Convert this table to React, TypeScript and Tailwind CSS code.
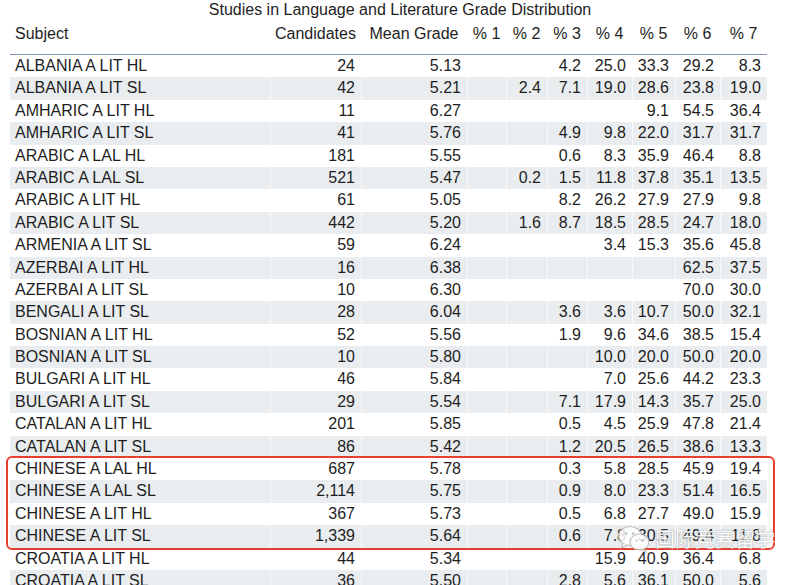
import React from "react";

type Row = [string, string, string, string, string, string, string, string, string, string];

const rows: Row[] = [
  ["ALBANIA A LIT HL", "24", "5.13", "", "", "4.2", "25.0", "33.3", "29.2", "8.3"],
  ["ALBANIA A LIT SL", "42", "5.21", "", "2.4", "7.1", "19.0", "28.6", "23.8", "19.0"],
  ["AMHARIC A LIT HL", "11", "6.27", "", "", "", "", "9.1", "54.5", "36.4"],
  ["AMHARIC A LIT SL", "41", "5.76", "", "", "4.9", "9.8", "22.0", "31.7", "31.7"],
  ["ARABIC A LAL HL", "181", "5.55", "", "", "0.6", "8.3", "35.9", "46.4", "8.8"],
  ["ARABIC A LAL SL", "521", "5.47", "", "0.2", "1.5", "11.8", "37.8", "35.1", "13.5"],
  ["ARABIC A LIT HL", "61", "5.05", "", "", "8.2", "26.2", "27.9", "27.9", "9.8"],
  ["ARABIC A LIT SL", "442", "5.20", "", "1.6", "8.7", "18.5", "28.5", "24.7", "18.0"],
  ["ARMENIA A LIT SL", "59", "6.24", "", "", "", "3.4", "15.3", "35.6", "45.8"],
  ["AZERBAI A LIT HL", "16", "6.38", "", "", "", "", "", "62.5", "37.5"],
  ["AZERBAI A LIT SL", "10", "6.30", "", "", "", "", "", "70.0", "30.0"],
  ["BENGALI A LIT SL", "28", "6.04", "", "", "3.6", "3.6", "10.7", "50.0", "32.1"],
  ["BOSNIAN A LIT HL", "52", "5.56", "", "", "1.9", "9.6", "34.6", "38.5", "15.4"],
  ["BOSNIAN A LIT SL", "10", "5.80", "", "", "", "10.0", "20.0", "50.0", "20.0"],
  ["BULGARI A LIT HL", "46", "5.84", "", "", "", "7.0", "25.6", "44.2", "23.3"],
  ["BULGARI A LIT SL", "29", "5.54", "", "", "7.1", "17.9", "14.3", "35.7", "25.0"],
  ["CATALAN A LIT HL", "201", "5.85", "", "", "0.5", "4.5", "25.9", "47.8", "21.4"],
  ["CATALAN A LIT SL", "86", "5.42", "", "", "1.2", "20.5", "26.5", "38.6", "13.3"],
  ["CHINESE A LAL HL", "687", "5.78", "", "", "0.3", "5.8", "28.5", "45.9", "19.4"],
  ["CHINESE A LAL SL", "2,114", "5.75", "", "", "0.9", "8.0", "23.3", "51.4", "16.5"],
  ["CHINESE A LIT HL", "367", "5.73", "", "", "0.5", "6.8", "27.7", "49.0", "15.9"],
  ["CHINESE A LIT SL", "1,339", "5.64", "", "", "0.6", "7.8", "30.5", "49.4", "11.8"],
  ["CROATIA A LIT HL", "44", "5.34", "", "", "", "15.9", "40.9", "36.4", "6.8"],
  ["CROATIA A LIT SL", "36", "5.50", "", "", "2.8", "5.6", "36.1", "50.0", "5.6"],
];

const headers = ["Candidates", "Mean Grade", "% 1", "% 2", "% 3", "% 4", "% 5", "% 6", "% 7"];

// subject | candidates | mean | %1..%7
const cols = "grid-cols-[260px_91px_106px_39px_41px_40px_45px_43px_45px_47px]";

const WeChatMark = () => (
  <svg width="34" height="28" viewBox="0 0 34 28">
    <ellipse cx="13" cy="11" rx="11.5" ry="9.5" fill="#fff" stroke="#b8b8b8" strokeWidth="1.2" />
    <path d="M6 18.5 L4.5 23 L10 20" fill="#fff" stroke="#b8b8b8" strokeWidth="1.2" />
    <ellipse cx="22.5" cy="17" rx="9.5" ry="8" fill="#fff" stroke="#b8b8b8" strokeWidth="1.2" />
    <path d="M27 23.5 L29 27 L24.5 24.8" fill="#fff" stroke="#b8b8b8" strokeWidth="1.2" />
    <circle cx="9" cy="8.5" r="1.3" fill="#b8b8b8" />
    <circle cx="16" cy="8.5" r="1.3" fill="#b8b8b8" />
    <circle cx="19.5" cy="15.5" r="1.1" fill="#b8b8b8" />
    <circle cx="25.5" cy="15.5" r="1.1" fill="#b8b8b8" />
  </svg>
);

export default function App() {
  return (
    <div className="relative w-[800px] h-[585px] overflow-hidden bg-white text-[#1e1e1e] font-['Liberation_Sans',Arial,sans-serif] text-[16px]">
      <div className="h-[21px] leading-[20px] text-center">
        Studies in Language and Literature Grade Distribution
      </div>
      <div className="mx-[10px] w-[757px]">
        <div className={`grid ${cols} h-[34px] items-end pb-[10px] leading-[20px] border-b border-[#8393b0]`}>
          <div className="pl-[5px]">Subject</div>
          {headers.map((h) => (
            <div key={h} className="text-center whitespace-nowrap">
              {h}
            </div>
          ))}
        </div>
        {rows.map((r, i) => (
          <div
            key={r[0]}
            className={`grid ${cols} h-[22.4px] leading-[22.4px] ${i % 2 === 1 ? "bg-[#eaedf0]" : "bg-white"}`}
          >
            <div className="pl-[5px] whitespace-nowrap">{r[0]}</div>
            {r.slice(1).map((v, j) => (
              <div key={j} className="text-right pr-[6px] border-l border-white/70 whitespace-nowrap">
                {v}
              </div>
            ))}
          </div>
        ))}
      </div>

      <div className="absolute left-[6px] top-[456px] w-[769px] h-[94px] border-2 border-[#e8402f] rounded-[6px]" />

      <div className="absolute left-[617px] top-[525px] flex items-center gap-[4px] opacity-85">
        <WeChatMark />
        <span className="text-[20px] leading-[24px] text-white font-['Noto_Sans_CJK_SC',sans-serif] [text-shadow:0_0_1px_#aaa,0_0_1px_#aaa,0_0_1px_#aaa]">
          国际竞赛留学
        </span>
      </div>
    </div>
  );
}
